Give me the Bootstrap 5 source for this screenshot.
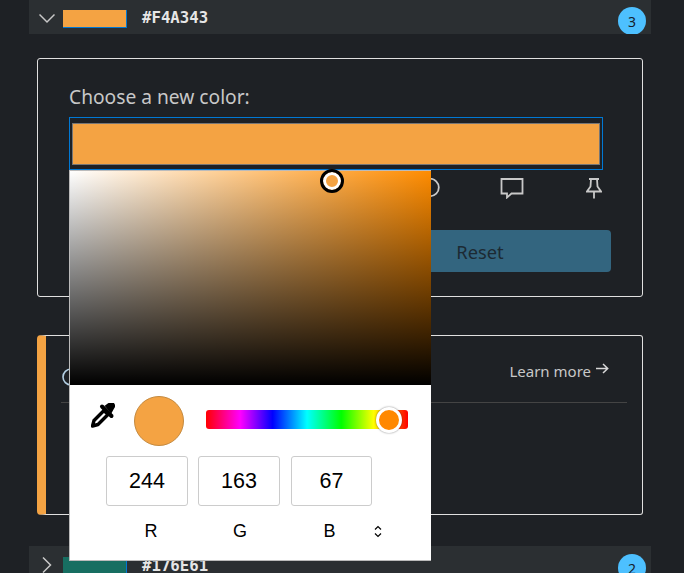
<!doctype html>
<html lang="en"><head><meta charset="utf-8">
<link href="https://cdn.jsdelivr.net/npm/bootstrap@5.3.0/dist/css/bootstrap.min.css" rel="stylesheet">
<style>
html,body{height:573px;overflow:hidden;background:#1e2125}
body{font-family:"Noto Sans","Open Sans",sans-serif;color:#c8c8c8;position:relative}
.stage{padding:0 33px 0 29px}
.acc-head{height:34px;background:#2b2f32;padding-left:10px;padding-right:5px;overflow:hidden}
.acc-head.second{margin-top:31px;height:40px;align-items:flex-start;padding-top:3px}
.swatch{width:64px;height:18px;background:#f4a343;border-right:1px solid #0078d4;border-bottom:1px solid #0078d4;margin-left:8px;margin-top:10px}
.swatch.teal{background:#176e61;margin-top:8px}
.hex{font:700 15.700px/12px "DejaVu Sans Mono",monospace;color:#e6e6e6;margin-left:15px;margin-top:12px}
.second .hex{margin-top:11px}
.count{width:28px;height:28px;border-radius:50%;background:#4dc0ff;color:#16202c;font-size:14px;margin-top:7px;flex:none}
.second .count{margin-top:5px}
.next-chev{margin-left:3px;margin-right:3px}
.panel{border:1px solid #e0e0e0;border-radius:3px;margin-left:8px;margin-right:8px}
.panel-a{margin-top:24px;height:239px;padding:21px 31px 0}
.pick-label{font-size:19.200px;line-height:34px;color:#c8c8c8;height:37px}
.pick-field{width:534px;height:53px;border:1px solid #0078d4;padding:5px 2px 4px}
.pick-fill{height:100%;background:#f4a343;border:1px solid #767676}
.tool-row{height:30px;padding-top:8px;width:534px}
.tool-ring{margin-left:351px}
.tool-talk{margin-left:60px}
.tool-pin{margin-left:62px}
.reset-wrap{margin-top:30px;width:542px}
.reset-btn{width:262px;height:42px;background:#33657f;color:#1c2a33;border-radius:4px;font-size:18.300px;padding-top:2px}
.panel-b{margin-top:38px;height:180px;border-left:9px solid #f4a343;padding:0 15px;border-top-left-radius:4px;border-bottom-left-radius:4px}
.info-top{height:67px;border-bottom:1px solid #444;padding-top:24px}
.info-ring{margin-top:8px;margin-left:1px}
.learn{font-size:15px;color:#c8c8c8;text-decoration:none;line-height:22px;margin-right:18px}
.learn svg{margin-left:5px;vertical-align:3px}
.popup{position:absolute;left:69px;top:170px;width:362px;height:391px;background:#fff;border:1px solid #bbb;border-right:0;color:#000;font-family:"Liberation Sans",Arial,sans-serif}
.sat{position:relative;height:214px;background:linear-gradient(to top,#000,transparent),linear-gradient(to right,#fff,#ff8c00)}
.sat-dot{position:absolute;left:250px;top:-2px;width:24px;height:24px;border-radius:50%;background:#f4a343;border:3px solid #000;box-shadow:inset 0 0 0 3px #fff}
.tools{height:71px;padding-top:11px;padding-left:21px}
.preview{width:50px;height:50px;border-radius:50%;background:#f4a343;border:1px solid #c48a40;margin-left:19px}
.hue{position:relative;width:202px;height:19px;border-radius:3px;margin-left:22px;margin-top:14px;background:linear-gradient(to right,#f00,#f0f 17%,#00f 33%,#0ff 50%,#0f0 67%,#ff0 83%,#f00)}
.hue-dot{position:absolute;left:170px;top:-3px;width:26px;height:26px;border-radius:50%;background:#ff8800;border:3px solid #fff;box-shadow:0 0 2px rgba(0,0,0,.5)}
.vals{padding-left:36px}
.vals span{display:flex;align-items:center;justify-content:center;width:82px;height:50px;border:1px solid #ccc;border-radius:3px;font-size:21.500px}
.vals span+span{margin-left:10px}
.vals span:last-child{margin-left:11px;width:81px}
.labs{padding-left:36px;margin-top:15px;font-size:18px;line-height:21px;height:21px}
.labs span{text-align:center;display:block}
.lab-r{width:90px}.lab-g{width:88px}.lab-b{width:91px}
.swap{margin-left:-1px;margin-top:4px}
.picker-tool{margin-top:7px}
</style></head><body>
<div class="stage">
  <div class="acc-head d-flex align-items-start">
    <svg class="mt-2" width="16" height="16" viewBox="0 0 16 16" fill="none" stroke="#c8c8c8" stroke-width="1.500"><path d="M.5 6.500 8 14 15.500 6.500"/></svg>
    <div class="swatch"></div>
    <div class="hex">#F4A343</div>
    <div class="count d-flex align-items-center justify-content-center ms-auto">3</div>
  </div>
  <div class="panel panel-a">
    <div class="pick-label">Choose a new color:</div>
    <div class="pick-field"><div class="pick-fill"></div></div>
    <div class="tool-row d-flex align-items-start">
      <svg class="tool-ring" width="20" height="20" viewBox="0 0 20 20" fill="none" stroke="#c8c8c8" stroke-width="1.800"><circle cx="10" cy="9.500" r="8.800"/></svg>
      <svg class="tool-talk" width="24" height="21" viewBox="0 0 24 21" fill="none" stroke="#c8c8c8" stroke-width="1.800"><path d="M1.500 1h21v14.500H11.500L7 19.500v-4H1.500z"/></svg>
      <svg class="tool-pin" width="16" height="21" viewBox="0 0 16 21" fill="none" stroke="#c8c8c8" stroke-width="1.800"><path d="M3 1h10M5 1l-.5 7.500L1 13.500h14l-3.500-5L11 1M8 13.500v7"/></svg>
    </div>
    <div class="reset-wrap d-flex justify-content-end"><div class="reset-btn d-flex align-items-center justify-content-center">Reset</div></div>
  </div>
  <div class="panel panel-b">
    <div class="info-top d-flex justify-content-between align-items-start">
      <svg class="info-ring" width="18" height="18" viewBox="0 0 18 18" fill="none" stroke="#b4d0e4" stroke-width="1.600"><circle cx="9" cy="9" r="8"/></svg>
      <a class="learn" href="#">Learn more<svg width="13" height="11" viewBox="0 0 13 11" fill="none" stroke="#d8d8d8" stroke-width="1.500"><path d="M0 5.500h11.500M7 1l4.700 4.500L7 10"/></svg></a>
    </div>
  </div>
  <div class="acc-head second d-flex">
    <svg class="next-chev mt-2" width="10" height="16" viewBox="0 0 10 16" fill="none" stroke="#c8c8c8" stroke-width="1.500"><path d="M1 .5 8.500 8 1 15.500"/></svg>
    <div class="swatch teal"></div>
    <div class="hex">#176E61</div>
    <div class="count d-flex align-items-center justify-content-center ms-auto">2</div>
  </div>
</div>
<div class="popup">
  <div class="sat"><div class="sat-dot"></div></div>
  <div class="tools d-flex align-items-start">
    <svg class="picker-tool flex-shrink-0" width="24" height="25" viewBox="0 0 24 25"><path d="M11 3.500 20.500 13" stroke="#000" stroke-width="4" stroke-linecap="round"/><path d="M15 3 18 0.800a2.800 2.800 0 0 1 4.200 4.200L20 9z" fill="#000" stroke="#000" stroke-width="2"/><path d="M13 7.500 3 17.500 1.500 23 7 21.500 17 11.500z" fill="#fff" stroke="#000" stroke-width="3.400" stroke-linejoin="round"/></svg>
    <div class="preview flex-shrink-0"></div>
    <div class="hue"><div class="hue-dot"></div></div>
  </div>
  <div class="vals d-flex"><span>244</span><span>163</span><span>67</span></div>
  <div class="labs d-flex">
    <span class="lab-r">R</span><span class="lab-g">G</span><span class="lab-b">B</span>
    <svg class="swap" width="8" height="13" viewBox="0 0 8 13" fill="none" stroke="#000" stroke-width="1.200"><path d="M1 4.500 4 1.500l3 3M1 8.500l3 3 3-3"/></svg>
  </div>
</div>
</body></html>
